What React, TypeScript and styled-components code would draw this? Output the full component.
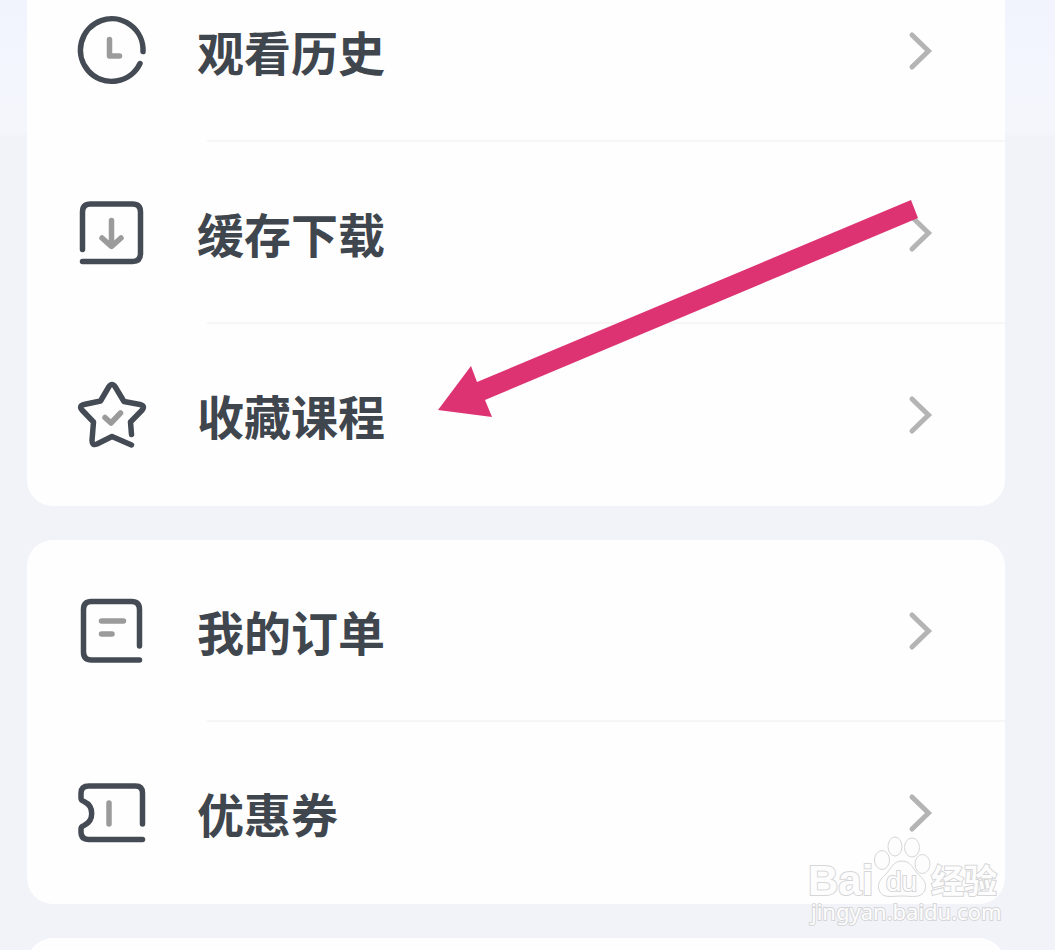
import React from 'react';
import styled, { createGlobalStyle } from 'styled-components';

const GlobalStyle = createGlobalStyle`
  * { box-sizing: border-box; }
  html, body, #root { height: 100%; }
  body {
    margin: 0;
    overflow: hidden;
    background: #f2f3f8;
    font-family: "Noto Sans CJK SC", "Noto Sans", sans-serif;
  }
`;

const Page = styled.main`
  position: relative;
  display: flex;
  flex-direction: column;
  gap: 34px;
  height: 100%;
  overflow: hidden;
  padding: 0 50px 0 27px;
  background: linear-gradient(#f1f4fd 0, #f3f6fd 70px, #f4f6fb 132px, #f2f3f8 138px) no-repeat;
`;

const Card = styled.ul<{ $scrolled?: boolean }>`
  position: relative;
  flex: none;
  min-height: 182px;
  margin: ${(p) => (p.$scrolled ? '-40px 0 0' : '0')};
  padding: 0;
  list-style: none;
  border-radius: 26px;
  background: #fefefe;
`;

const Item = styled.li`
  position: relative;
  &:not(:last-child)::after {
    content: '';
    position: absolute;
    left: 180px;
    right: 0;
    bottom: 0;
    height: 2px;
    background: #f6f6f7;
  }
`;

const RowLink = styled.a`
  display: flex;
  align-items: center;
  height: 182px;
  padding: 0 70px 0 49px;
  color: #40464e;
  text-decoration: none;
`;

const Label = styled.span`
  flex: 1;
  margin-left: 49px;
  font-size: 47px;
  line-height: 64px;
  font-weight: 700;
`;

const Icon = styled.svg`
  flex: none;
  width: 72px;
  height: 72px;
  fill: none;
  stroke: #454b54;
  stroke-width: 5.5;
  stroke-linecap: round;
  stroke-linejoin: round;
  .inner { stroke: #9b9b9c; }
`;

const Chevron = styled.svg`
  flex: none;
  width: 30px;
  height: 44px;
  fill: none;
  stroke: #b4b4b5;
  stroke-width: 5;
  stroke-linecap: round;
`;

const Pointer = styled.svg`
  position: absolute;
  left: 438px;
  top: 199px;
  width: 480px;
  height: 220px;
  fill: #dd3373;
  pointer-events: none;
`;

const Watermark = styled.svg`
  position: absolute;
  right: 50px;
  bottom: 16px;
  width: 200px;
  height: 100px;
  pointer-events: none;
  fill: #fdfdfd;
  stroke: #d6d6d8;
  stroke-width: 1;
  text { paint-order: stroke; stroke-width: 2; }
`;

const icons = {
  history: (
    <>
      <path d="M67 36.500A31.300 31.300 0 1 0 64 48.500" />
      <path className="inner" d="M33.500 24.500V41H43.500" />
    </>
  ),
  download: (
    <>
      <path d="M6.500 52.500V15Q6.500 7 14.500 7H56.500Q64.500 7 64.500 15V56.500Q64.500 64.500 56.500 64.500H6.500" />
      <path className="inner" d="M35.500 23.500V48M26 41L35.500 49.500L45 41" />
    </>
  ),
  star: (
    <g transform="translate(0 1.5)">
      <path d="M55.500 54L54.500 41.500L66.200 29.500Q69.500 25.500 64 24L48 21L39.300 6.500Q36 1.500 32.700 6.500L24.500 20.500L8 24Q2.500 25.500 6 29.500L17.500 41.500L16 60Q16 65.500 21 63.500L36 56L55.500 64.500" />
      <path className="inner" d="M29 37L35 42.500L44.500 32.500" />
    </g>
  ),
  order: (
    <>
      <path d="M63.500 51V14.500Q63.500 6.500 55.500 6.500H15.500Q7.500 6.500 7.500 14.500V57Q7.500 65 15.500 65H63.500" />
      <path className="inner" d="M25.500 26H47.500M25.500 39H36" />
    </>
  ),
  coupon: (
    <>
      <path d="M66.500 47V16Q66.500 9 59.500 9H13Q5 9 5 16V21Q5 23.500 8 24.500A13.200 13.200 0 0 1 8 48.500Q5 49.500 5 52V55Q5 62.500 13 62.500H66.500" />
      <path className="inner" d="M33 26V47" />
    </>
  ),
};

function Row({ icon, label }: { icon: keyof typeof icons; label: string }) {
  return (
    <Item>
      <RowLink href="#">
        <Icon viewBox="0 0 72 72" aria-hidden="true">{icons[icon]}</Icon>
        <Label>{label}</Label>
        <Chevron viewBox="0 0 30 44" aria-hidden="true">
          <path d="M7 6L23.500 22L7 38" />
        </Chevron>
      </RowLink>
    </Item>
  );
}

export default function App() {
  return (
    <>
      <GlobalStyle />
      <Page>
        <Card $scrolled>
          <Row icon="history" label="观看历史" />
          <Row icon="download" label="缓存下载" />
          <Row icon="star" label="收藏课程" />
        </Card>
        <Card>
          <Row icon="order" label="我的订单" />
          <Row icon="coupon" label="优惠券" />
        </Card>
        <Card />
        <Pointer viewBox="0 0 480 220" aria-hidden="true">
          <path d="M0 211L33 167L39 183L473 1L480 19L47 201L54 218Z" />
        </Pointer>
        <Watermark viewBox="0 0 200 100" role="img" aria-label="Baidu 经验">
          <text x="3" y="61" fontFamily="Liberation Sans" fontWeight="700" fontSize="42">Bai</text>
          <ellipse cx="77" cy="26" rx="7.500" ry="9.500" />
          <ellipse cx="90" cy="12.500" rx="7" ry="9.500" />
          <ellipse cx="107" cy="13.500" rx="7.500" ry="9.500" />
          <ellipse cx="117.500" cy="30" rx="7.500" ry="9.500" />
          <path d="M97 27C88 27 86 35 81 40C75 45 72 50 74 56C77 65 87 62 97 62C107 62 116 65 120 56C122 50 119 45 113 40C108 35 106 27 97 27Z" />
          <text x="81" y="57" fontFamily="Liberation Sans" fontSize="28">du</text>
          <text x="126" y="59" fontFamily="Noto Sans CJK SC" fontWeight="700" fontSize="33">经验</text>
          <text x="6" y="86" fontFamily="Noto Sans" fontSize="22">jingyan.baidu.com</text>
        </Watermark>
      </Page>
    </>
  );
}
